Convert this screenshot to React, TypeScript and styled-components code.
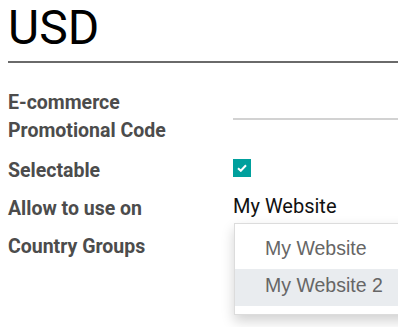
import React from 'react'
import styled, { createGlobalStyle } from 'styled-components'

const GlobalStyle = createGlobalStyle`
  html, body {
    margin: 0;
    padding: 0;
    background: #ffffff;
    overflow: hidden;
  }
  body {
    font-family: Roboto, "Noto Sans", sans-serif;
  }
`

const Sheet = styled.div`
  padding-left: 8px;
  width: 390px;
  height: 327px;
  position: relative;
  overflow: hidden;
`

const Title = styled.h1`
  margin: 0;
  font-family: Roboto, sans-serif;
  font-weight: 400;
  font-size: 48px;
  line-height: 55px;
  color: #000000;
  padding-bottom: 6px;
  border-bottom: 2px solid #6a6a6a;
`

const FieldGrid = styled.div`
  display: grid;
  grid-template-columns: 225px 1fr;
  row-gap: 10px;
  margin-top: 26px;
`

const Label = styled.div<{ $gapBelow?: number }>`
  font-family: Roboto, sans-serif;
  font-weight: 700;
  font-size: 19.5px;
  line-height: 28px;
  color: #4c4c4c;
  margin-bottom: ${({ $gapBelow }) => $gapBelow ?? 0}px;
`

const Cell = styled.div`
  position: relative;
`

const TextInput = styled.div`
  height: 31px;
  box-sizing: border-box;
  border-bottom: 2px solid #d2d2d2;
`

const Check = styled.span`
  display: inline-flex;
  align-items: center;
  justify-content: center;
  width: 18px;
  height: 18px;
  margin-top: 1px;
  background: #00a09d;
`

const Value = styled.div`
  font-family: Roboto, sans-serif;
  font-size: 20px;
  line-height: 22px;
  color: #111111;
`

const Dropdown = styled.ul`
  position: absolute;
  top: 28px;
  left: 1px;
  width: 200px;
  margin: 0;
  padding: 8px 0;
  list-style: none;
  background: #ffffff;
  border: 1px solid #dcdcdc;
  box-shadow: 0 6px 12px rgba(0, 0, 0, 0.18);
  z-index: 2;
`

const Option = styled.li<{ $active?: boolean }>`
  font-family: "Liberation Sans", Arial, sans-serif;
  font-size: 19.5px;
  line-height: 32px;
  padding: 0 0 5px 30px;
  color: #666666;
  background: ${({ $active }) => ($active ? '#e9ecef' : 'transparent')};
`

const App: React.FC = () => {
  return (
    <>
      <GlobalStyle />
      <Sheet>
        <Title>USD</Title>
        <FieldGrid>
          <Label $gapBelow={2}>
            E-commerce
            <br />
            Promotional Code
          </Label>
          <Cell>
            <TextInput />
          </Cell>

          <Label>Selectable</Label>
          <Cell>
            <Check>
              <svg width="10" height="8" viewBox="0 0 10 8">
                <path d="M1 4.2 L3.8 6.8 L9 1.2" fill="none" stroke="#ffffff" strokeWidth="2" />
              </svg>
            </Check>
          </Cell>

          <Label>Allow to use on</Label>
          <Cell>
            <Value>My Website</Value>
            <Dropdown>
              <Option>My Website</Option>
              <Option $active>My Website 2</Option>
            </Dropdown>
          </Cell>

          <Label>Country Groups</Label>
          <Cell />
        </FieldGrid>
      </Sheet>
    </>
  )
}

export default App
